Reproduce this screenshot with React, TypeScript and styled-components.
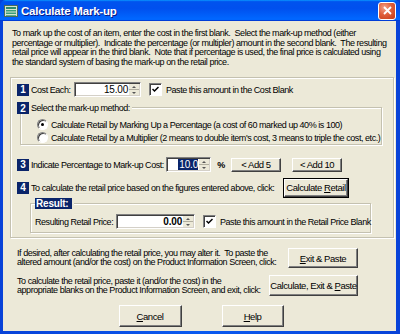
import React from 'react'
import styled, { createGlobalStyle } from 'styled-components'

const GlobalStyle = createGlobalStyle`
  html, body { margin: 0; padding: 0; background: #0831d9; }
  body { font-family: "Liberation Sans", Arial, sans-serif; }
`

const Window = styled.div`
  width: 400px;
  height: 334px;
  display: flex;
  flex-direction: column;
  background: linear-gradient(90deg, #0842d8, #0a5af0 50%, #0842d8);
  box-sizing: border-box;
`
const TitleBar = styled.div`
  height: 21px;
  flex: none;
  display: flex;
  align-items: center;
  padding: 0 3px 0 4px;
  background: linear-gradient(180deg, #0997ff, #0053ee 8%, #0050ee 40%, #0066ff 88%, #0066ff 93%, #005bff 95%, #003dd7 96%, #003dd7);
  border-radius: 6px 6px 0 0;
`
const Title = styled.span`
  flex: 1;
  margin-left: 3px;
  color: #fff;
  font: bold 11.5px "Liberation Sans", Arial, sans-serif;
  letter-spacing: -0.2px;
  text-shadow: 1px 1px 0 #0a1883;
`
const CloseButton = styled.div`
  width: 16px;
  height: 16px;
  margin-right: 1px;
  border: 1px solid #fff;
  border-radius: 3px;
  background: radial-gradient(circle at 35% 30%, #f3a38b, #e0603c 45%, #c43a16);
  display: flex;
  align-items: center;
  justify-content: center;
`
const Body = styled.div`
  flex: 1;
  margin: 0 4px 3px 3px;
  background: #ece9d8;
  display: flex;
  flex-direction: column;
  font-size: 9px;
  letter-spacing: -0.45px;
  color: #000;
`
const Intro = styled.div`
  padding: 8px 0 0 9px;
  line-height: 9.6px;
  white-space: pre;
`
const OuterGroup = styled.div`
  margin: 10px 0 0 7px;
  width: 376px;
  border: 1px solid #c4c1b0;
  box-shadow: 1px 1px 0 #fff, inset 1px 1px 0 #fff;
  display: flex;
  flex-direction: column;
  padding: 0 0 4px 6px;
`
const Row = styled.div<{ $top: number; $h: number }>`
  display: flex;
  align-items: center;
  margin-top: ${p => p.$top}px;
  height: ${p => p.$h}px;
  white-space: pre;
`
const NumBox = styled.div`
  width: 12px;
  height: 12px;
  flex: none;
  background: #0a246a;
  color: #fff;
  font-weight: bold;
  font-size: 10px;
  letter-spacing: 0;
  display: flex;
  align-items: center;
  justify-content: center;
  margin-right: 2px;
`
const Label = styled.span<{ $w?: number }>`
  ${p => (p.$w ? `width: ${p.$w}px; flex: none;` : '')}
`
const InputBox = styled.div<{ $w: number }>`
  width: ${p => p.$w}px;
  height: 15px;
  flex: none;
  box-sizing: border-box;
  background: #fff;
  border: 1px solid;
  border-color: #808080 #fff #fff #808080;
  box-shadow: inset 1px 1px 0 #404040, inset -1px -1px 0 #d4d0c8;
  display: flex;
  align-items: stretch;
`
const InputValue = styled.div<{ $bold?: boolean }>`
  flex: 1;
  display: flex;
  align-items: center;
  justify-content: flex-end;
  padding-right: 1px;
  font-size: 10px;
  letter-spacing: -0.2px;
  font-weight: ${p => (p.$bold ? 'bold' : 'normal')};
`
const Selected = styled.span`
  background: #0a246a;
  color: #fff;
  padding: 0 0 0 1px;
`
const Spin = styled.div`
  width: 10px;
  flex: none;
  display: flex;
  flex-direction: column;
  margin: 1px 1px 1px 0;
  background: #ece9d8;
`
const SpinPart = styled.div<{ $up?: boolean }>`
  flex: 1;
  display: flex;
  align-items: center;
  justify-content: center;
  border-bottom: ${p => (p.$up ? '1px solid #b0ad9e' : 'none')};
  &::after {
    content: '';
    border-left: 2px solid transparent;
    border-right: 2px solid transparent;
    ${p => (p.$up ? 'border-bottom: 2px solid #555;' : 'border-top: 2px solid #555;')}
  }
`
const CheckBox = styled.div`
  width: 11px;
  height: 11px;
  flex: none;
  background: #fff;
  border: 1px solid;
  border-color: #808080 #fff #fff #808080;
  box-shadow: inset 1px 1px 0 #404040;
  display: flex;
  align-items: center;
  justify-content: center;
  margin-right: 4px;
`
const GroupBox = styled.div<{ $ml: number; $w: number; $top: number }>`
  position: relative;
  margin: ${p => p.$top}px 0 0 ${p => p.$ml}px;
  width: ${p => p.$w}px;
  border: 1px solid #c4c1b0;
  box-shadow: 1px 1px 0 #fff, inset 1px 1px 0 #fff;
  display: flex;
  flex-direction: column;
`
const Legend = styled.div<{ $left: number }>`
  position: absolute;
  top: -6px;
  left: ${p => p.$left}px;
  display: flex;
  align-items: center;
  background: #ece9d8;
  padding-right: 2px;
  white-space: pre;
`
const ResultTag = styled.span`
  background: #0a246a;
  color: #fff;
  font-weight: bold;
  font-size: 10px;
  letter-spacing: -0.2px;
  padding: 0 3px 0 1px;
  line-height: 11px;
`
const RadioRow = styled.div`
  display: flex;
  align-items: center;
  height: 13px;
  padding-left: 16px;
  white-space: pre;
`
const Radio = styled.div<{ $on?: boolean }>`
  width: 9px;
  height: 9px;
  flex: none;
  border-radius: 50%;
  background: #fff;
  border: 1px solid;
  border-color: #808080 #fff #fff #808080;
  box-shadow: inset 1px 1px 0 #404040;
  margin-right: 3px;
  display: flex;
  align-items: center;
  justify-content: center;
  &::after {
    content: '';
    width: 3px;
    height: 3px;
    border-radius: 50%;
    background: ${p => (p.$on ? '#000' : 'transparent')};
  }
`
const Button = styled.div<{ $w: number; $h: number; $default?: boolean }>`
  width: ${p => p.$w}px;
  height: ${p => p.$h}px;
  flex: none;
  box-sizing: border-box;
  background: #ece9d8;
  border: 1px solid;
  border-color: #fff #404040 #404040 #fff;
  box-shadow: inset -1px -1px 0 #808080;
  ${p => (p.$default ? 'outline: 1px solid #000;' : '')}
  display: flex;
  align-items: center;
  justify-content: center;
  font-size: 9.5px;
  white-space: pre;
  u { text-decoration: underline; text-underline-offset: 1px; }
`
const BottomRow = styled.div<{ $top: number }>`
  display: flex;
  align-items: center;
  justify-content: space-between;
  margin-top: ${p => p.$top}px;
  padding: 0 38px 0 14px;
`
const BottomText = styled.div`
  line-height: 9px;
  white-space: pre;
`
const FooterRow = styled.div`
  display: flex;
  justify-content: center;
  gap: 40px;
  margin-top: 9px;
  padding-left: 3px;
`

const Spinner = () => (
  <Spin>
    <SpinPart $up />
    <SpinPart />
  </Spin>
)

const Check = () => (
  <CheckBox>
    <svg width="7" height="7" viewBox="0 0 7 7">
      <path d="M0.5 3 L2.5 5 L6.5 1" fill="none" stroke="#000" strokeWidth="1.5" />
    </svg>
  </CheckBox>
)

const AppIcon = () => (
  <svg width="14" height="12" viewBox="0 0 14 12">
    <rect x="0.5" y="0.5" width="13" height="11" fill="#d8e4d0" stroke="#4a6a5a" />
    <rect x="2" y="2" width="10" height="2" fill="#2e8b6a" />
    <rect x="2" y="5" width="10" height="1.5" fill="#3aa07a" />
    <rect x="2" y="7.5" width="10" height="1.5" fill="#3aa07a" />
    <rect x="2" y="10" width="10" height="0.8" fill="#3aa07a" />
  </svg>
)

export default function App() {
  return (
    <>
      <GlobalStyle />
      <Window>
        <TitleBar>
          <AppIcon />
          <Title>Calculate Mark-up</Title>
          <CloseButton>
            <svg width="9" height="9" viewBox="0 0 9 9">
              <path d="M1 1 L8 8 M8 1 L1 8" stroke="#fff" strokeWidth="1.8" />
            </svg>
          </CloseButton>
        </TitleBar>
        <Body>
          <Intro>
            {'To mark up the cost of an item, enter the cost in the first blank.  Select the mark-up method (either\n'}
            {'percentage or multiplier).  Indicate the percentage (or multipler) amount in the second blank.  The resulting\n'}
            {'retail price will appear in the third blank.  Note that if percentage is used, the final price is calculated using\n'}
            {'the standard system of basing the mark-up on the retail price.'}
          </Intro>
          <OuterGroup>
            <Row $top={4} $h={15}>
              <NumBox>1</NumBox>
              <Label $w={43}>Cost Each:</Label>
              <InputBox $w={67}>
                <InputValue>15.00</InputValue>
                <Spinner />
              </InputBox>
              <Label $w={8} />
              <Check />
              <Label>Paste this amount in the Cost Blank</Label>
            </Row>
            <GroupBox $ml={3} $w={360} $top={10}>
              <Legend $left={-4}>
                <NumBox>2</NumBox>
                Select the mark-up method:
              </Legend>
              <div style={{ height: 10 }} />
              <RadioRow>
                <Radio $on />
                Calculate Retail by Marking Up a Percentage (a cost of 60 marked up 40% is 100)
              </RadioRow>
              <RadioRow>
                <Radio />
                Calculate Retail by a Multiplier (2 means to double item's cost, 3 means to triple the cost, etc.)
              </RadioRow>
            </GroupBox>
            <Row $top={12} $h={15}>
              <NumBox>3</NumBox>
              <Label $w={135}>Indicate Percentage to Mark-up Cost:</Label>
              <InputBox $w={45}>
                <InputValue>
                  <Selected>10.0</Selected>
                </InputValue>
                <Spinner />
              </InputBox>
              <Label $w={20} style={{ textAlign: 'center', fontWeight: 'bold' }}>%</Label>
              <Button $w={50} $h={14}>{'< Add 5'}</Button>
              <Label $w={11} />
              <Button $w={50} $h={14}>{'< Add 10'}</Button>
            </Row>
            <Row $top={6} $h={19}>
              <NumBox>4</NumBox>
              <Label $w={253}>To calculate the retail price based on the figures entered above, click:</Label>
              <Button $w={64} $h={18} $default>
                <span>Calculate <u>R</u>etail</span>
              </Button>
            </Row>
            <GroupBox $ml={13} $w={339} $top={6}>
              <Legend $left={4}>
                <ResultTag>Result:</ResultTag>
              </Legend>
              <Row $top={10} $h={15} style={{ paddingLeft: 4, marginBottom: 3 }}>
                <Label $w={81}>Resulting Retail Price:</Label>
                <InputBox $w={79}>
                  <InputValue $bold>0.00</InputValue>
                  <Spinner />
                </InputBox>
                <Label $w={8} />
                <Check />
                <Label>Paste this amount in the Retail Price Blank</Label>
              </Row>
            </GroupBox>
          </OuterGroup>
          <BottomRow $top={10}>
            <BottomText>
              {'If desired, after calculating the retail price, you may alter it.  To paste the\n'}
              {'altered amount (and/or the cost) on the Product Information Screen, click:'}
            </BottomText>
            <Button $w={70} $h={20}>
              <span><u>E</u>xit &amp; Paste</span>
            </Button>
          </BottomRow>
          <BottomRow $top={7}>
            <BottomText>
              {'To calculate the retail price, paste it (and/or the cost) in the\n'}
              {'appropriate blanks on the Product Information Screen, and exit, click:'}
            </BottomText>
            <Button $w={89} $h={21}>
              <span>Calculate, Exit &amp; <u>P</u>aste</span>
            </Button>
          </BottomRow>
          <FooterRow>
            <Button $w={63} $h={22}>
              <span><u>C</u>ancel</span>
            </Button>
            <Button $w={62} $h={22}>
              <span><u>H</u>elp</span>
            </Button>
          </FooterRow>
        </Body>
      </Window>
    </>
  )
}
